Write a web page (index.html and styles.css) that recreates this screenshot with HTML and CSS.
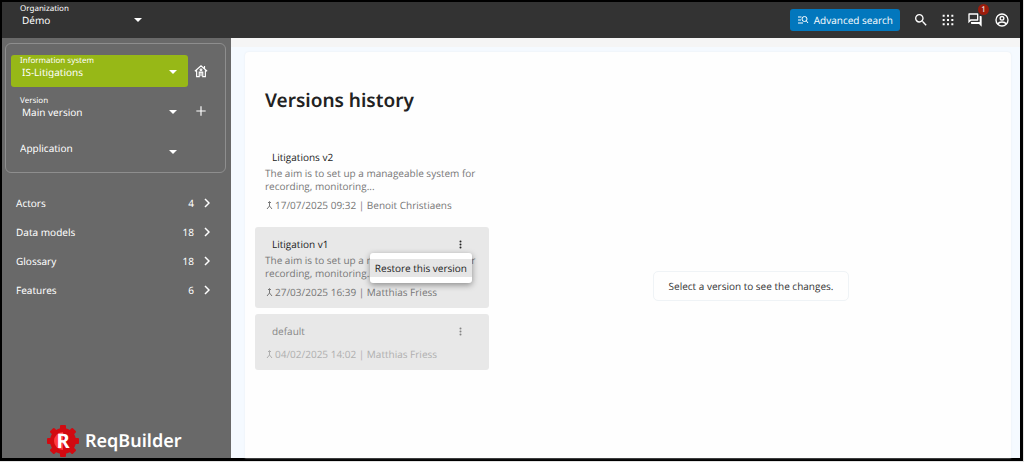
FILE: index.html
```html
<!DOCTYPE html>
<html lang="en">
<head>
    <meta charset="UTF-8">
    <meta name="viewport" content="width=device-width, initial-scale=1.0">
    <title>ReqBuilder - Versions history</title>
    <link rel="stylesheet" href="styles.css">
</head>
<body>
    <div class="app">
        <header class="topbar">
            <div class="field org-field">
                <label for="organization">Organization</label>
                <select id="organization"><option>Démo</option></select>
            </div>
            <div class="topbar-actions">
                <button class="btn-search" type="button">
                    <svg width="12" height="12" viewBox="0 0 24 24" fill="none" stroke="currentColor" stroke-width="2"><path d="M2 6h7M2 12h6M2 18h10"/><circle cx="15" cy="10" r="5"/><path d="M18.500 13.500L22 18"/></svg>
                    Advanced search
                </button>
                <button class="icon-btn" type="button" aria-label="Search">
                    <svg width="16" height="16" viewBox="0 0 24 24" fill="currentColor"><path d="M15.500 14h-.79l-.28-.27A6.470 6.470 0 0 0 16 9.500 6.500 6.500 0 1 0 9.500 16c1.610 0 3.090-.59 4.230-1.570l.27.28v.79l5 4.990L20.490 19l-4.990-5zm-6 0C7.010 14 5 11.990 5 9.500S7.010 5 9.500 5 14 7.010 14 9.500 11.990 14 9.500 14z"/></svg>
                </button>
                <button class="icon-btn" type="button" aria-label="Applications">
                    <svg width="16" height="16" viewBox="0 0 24 24" fill="currentColor"><path d="M4 4h3v3H4zM10.500 4h3v3h-3zM17 4h3v3h-3zM4 10.500h3v3H4zM10.500 10.500h3v3h-3zM17 10.500h3v3h-3zM4 17h3v3H4zM10.500 17h3v3h-3zM17 17h3v3h-3z"/></svg>
                </button>
                <button class="icon-btn" type="button" aria-label="Messages">
                    <svg width="16" height="16" viewBox="0 0 24 24" fill="currentColor"><path d="M15 4v7H5.170L4 12.170V4h11m1-2H3c-.55 0-1 .45-1 1v14l4-4h10c.55 0 1-.45 1-1V3c0-.55-.45-1-1-1zm5 4h-2v9H6v2c0 .55.45 1 1 1h11l4 4V7c0-.55-.45-1-1-1z"/></svg>
                    <span class="badge">1</span>
                </button>
                <button class="icon-btn" type="button" aria-label="Account">
                    <svg width="16" height="16" viewBox="0 0 24 24" fill="none" stroke="currentColor" stroke-width="2"><circle cx="12" cy="12" r="9"/><circle cx="12" cy="9.500" r="2.800"/><path d="M5.500 18c1.500-2.200 4-3 6.500-3s5 .8 6.500 3"/></svg>
                </button>
            </div>
        </header>

        <div class="layout">
            <aside class="sidebar">
                <div class="context-box">
                    <div class="context-row">
                        <div class="field field-green">
                            <label for="system">Information system</label>
                            <select id="system"><option>IS-Litigations</option></select>
                        </div>
                        <button class="icon-btn" type="button" aria-label="Home">
                            <svg width="14" height="14" viewBox="0 0 24 24" fill="none" stroke="currentColor" stroke-width="2"><path d="M1.500 12.500L12 3l10.500 9.500M18 8V3.500M4.500 11v10.500H9V14h6v7.500h4.500V11M12 14v7"/><circle cx="12" cy="10" r="1.500"/></svg>
                        </button>
                    </div>
                    <div class="context-row">
                        <div class="field">
                            <label for="version">Version</label>
                            <select id="version"><option>Main version</option></select>
                        </div>
                        <button class="icon-btn" type="button" aria-label="Add a version">
                            <svg width="14" height="14" viewBox="0 0 24 24" fill="none" stroke="currentColor" stroke-width="2"><path d="M12 4v16M4 12h16"/></svg>
                        </button>
                    </div>
                    <div class="context-row">
                        <div class="field field-plain">
                            <select id="application" aria-label="Application"><option>Application</option></select>
                        </div>
                    </div>
                </div>

                <nav class="menu">
                    <a href="#actors"><span>Actors</span><span class="count">4</span><svg width="6" height="10" viewBox="0 0 6 10"><path d="M1 1l4 4-4 4"/></svg></a>
                    <a href="#data-models"><span>Data models</span><span class="count">18</span><svg width="6" height="10" viewBox="0 0 6 10"><path d="M1 1l4 4-4 4"/></svg></a>
                    <a href="#glossary"><span>Glossary</span><span class="count">18</span><svg width="6" height="10" viewBox="0 0 6 10"><path d="M1 1l4 4-4 4"/></svg></a>
                    <a href="#features"><span>Features</span><span class="count">6</span><svg width="6" height="10" viewBox="0 0 6 10"><path d="M1 1l4 4-4 4"/></svg></a>
                </nav>

                <div class="logo">
                    <div class="logo-mark">
                        <svg width="32" height="32" viewBox="0 0 32 32">
                            <g fill="#d20a11">
                                <circle cx="16" cy="16" r="13"/>
                                <rect x="13" y="0" width="6" height="32" rx="1"/>
                                <rect x="13" y="0" width="6" height="32" rx="1" transform="rotate(45 16 16)"/>
                                <rect x="13" y="0" width="6" height="32" rx="1" transform="rotate(90 16 16)"/>
                                <rect x="13" y="0" width="6" height="32" rx="1" transform="rotate(135 16 16)"/>
                            </g>
                            <path d="M16 7a9 9 0 0 0 0 18z" fill="#ff3b40"/>
                        </svg>
                        <span>R</span>
                    </div>
                    <span class="logo-name">ReqBuilder</span>
                </div>
            </aside>

            <main class="content">
                <section class="panel">
                    <div class="history">
                        <h1>Versions history</h1>

                        <article class="version current">
                            <div class="version-head"><h2>Litigations v2</h2></div>
                            <p>The aim is to set up a manageable system for recording, monitoring...</p>
                            <div class="meta">
                                <svg width="7" height="9" viewBox="0 0 7 9"><path d="M2 2l1.500-1.500L5 2M3.500 1v4L1 8M3.500 5L6 8"/></svg>
                                17/07/2025 09:32 | Benoit Christiaens
                            </div>
                        </article>

                        <article class="version">
                            <div class="version-head">
                                <h2>Litigation v1</h2>
                                <button class="more" type="button" aria-label="Version actions">
                                    <svg width="3" height="9" viewBox="0 0 3 9" fill="currentColor"><circle cx="1.500" cy="1.500" r="1"/><circle cx="1.500" cy="4.500" r="1"/><circle cx="1.500" cy="7.500" r="1"/></svg>
                                </button>
                            </div>
                            <p>The aim is to set up a manageable system for recording, monitoring...</p>
                            <div class="meta">
                                <svg width="7" height="9" viewBox="0 0 7 9"><path d="M2 2l1.500-1.500L5 2M3.500 1v4L1 8M3.500 5L6 8"/></svg>
                                27/03/2025 16:39 | Matthias Friess
                            </div>
                            <div class="popup">
                                <button type="button">Restore this version</button>
                            </div>
                        </article>

                        <article class="version">
                            <div class="faded">
                                <div class="version-head">
                                    <h2>default</h2>
                                    <button class="more" type="button" aria-label="Version actions">
                                        <svg width="3" height="9" viewBox="0 0 3 9" fill="currentColor"><circle cx="1.500" cy="1.500" r="1"/><circle cx="1.500" cy="4.500" r="1"/><circle cx="1.500" cy="7.500" r="1"/></svg>
                                    </button>
                                </div>
                                <div class="meta">
                                    <svg width="7" height="9" viewBox="0 0 7 9"><path d="M2 2l1.500-1.500L5 2M3.500 1v4L1 8M3.500 5L6 8"/></svg>
                                    04/02/2025 14:02 | Matthias Friess
                                </div>
                            </div>
                        </article>
                    </div>

                    <div class="changes">
                        <div class="empty">Select a version to see the changes.</div>
                    </div>
                </section>
            </main>
        </div>
    </div>
</body>
</html>
```
FILE: styles.css
```css
* {
    box-sizing: border-box;
}
body {
    margin: 0;
    padding: 0 1px 1px 0;
    min-height: 100vh;
    display: flex;
    background: #e4e4e4;
    font-family: "Noto Sans", sans-serif;
    font-size: 10px;
    color: #333;
    text-rendering: geometricPrecision;
}
button,
select {
    font-family: inherit;
    font-size: inherit;
    color: inherit;
    background: none;
    border: none;
    padding: 0;
    margin: 0;
    cursor: pointer;
    text-rendering: inherit;
}
svg {
    display: block;
    flex: none;
}
.app {
    flex: 1;
    display: flex;
    flex-direction: column;
    border: 2px solid #000;
    border-right-width: 3px;
    border-bottom-width: 3px;
}

/* Top bar */
.topbar {
    display: flex;
    justify-content: space-between;
    align-items: center;
    height: 36px;
    padding-right: 10px;
    background: #333;
    color: #fff;
}
.topbar-actions {
    display: flex;
    align-items: center;
    gap: 11px;
}
.btn-search {
    display: flex;
    align-items: center;
    gap: 5px;
    height: 22px;
    padding: 0 7px;
    margin-right: 2px;
    background: #0277bd;
    border-radius: 3px;
    font-family: "Open Sans", sans-serif;
    font-weight: 500;
}
.icon-btn {
    position: relative;
    color: #fff;
}
.badge {
    position: absolute;
    top: -8px;
    right: -6px;
    width: 11px;
    height: 11px;
    border-radius: 50%;
    background: #9c1c0c;
    font-size: 8px;
    line-height: 11px;
    text-align: center;
}

/* Drop-down fields */
.field {
    position: relative;
    width: 177px;
    height: 32px;
    padding-left: 9px;
    color: #fff;
}
.field label {
    display: block;
    font-size: 8px;
    line-height: 11px;
}
.field select {
    display: block;
    width: 100%;
    height: 12px;
    padding-left: 2px;
    appearance: none;
    line-height: 12px;
}
.field option {
    color: #333;
}
.field::after {
    content: "";
    position: absolute;
    right: 11px;
    top: 15px;
    border: 4px solid transparent;
    border-top-color: #fff;
    border-bottom: none;
    pointer-events: none;
}
.org-field {
    width: 151px;
    height: 34px;
    padding-left: 18px;
}
.field-green {
    background: #97b817;
    border-radius: 3px;
}
.field-plain select {
    height: 26px;
    padding-left: 0;
}

/* Sidebar */
.layout {
    flex: 1;
    display: flex;
}
.sidebar {
    width: 229px;
    display: flex;
    flex-direction: column;
    background: #696969;
    color: #fff;
}
.context-box {
    display: flex;
    flex-direction: column;
    gap: 8px;
    height: 130px;
    margin: 5px 5px 0 3px;
    padding: 11px 5px;
    border: 1px solid #8e8e8e;
    border-radius: 6px;
}
.context-row {
    display: flex;
    align-items: center;
    gap: 6px;
}
.menu {
    margin-top: 15px;
}
.menu a {
    display: flex;
    align-items: center;
    height: 29px;
    padding: 0 21px 0 14px;
    color: #fff;
    text-decoration: none;
}
.menu .count {
    margin-left: auto;
    margin-right: 10px;
}
.menu path {
    fill: none;
    stroke: #fff;
    stroke-width: 1.5;
}
.logo {
    display: flex;
    align-items: center;
    gap: 6px;
    margin-top: auto;
    padding: 0 0 1px 45px;
}
.logo-mark {
    display: grid;
    place-items: center;
}
.logo-mark svg,
.logo-mark span {
    grid-area: 1 / 1;
}
.logo-mark span {
    font-size: 20px;
    font-weight: 700;
    line-height: 20px;
}
.logo-name {
    font-size: 18px;
    font-weight: 600;
    line-height: 24px;
}

/* Content */
.content {
    flex: 1;
    display: flex;
    padding: 5px 9px 0 14px;
    background: #f5faff;
    border-top: 9px solid #f5f5f5;
}
.panel {
    flex: 1;
    display: flex;
    padding: 0 10px;
    background: #fefefe;
    border-radius: 4px 4px 0 0;
    box-shadow: 0 0 2px #e6eaee;
    font-family: "Open Sans", sans-serif;
}
.history {
    width: 234px;
    display: flex;
    flex-direction: column;
    gap: 6px;
}
h1 {
    margin: 34px 10px 20px;
    font-family: "Noto Sans", sans-serif;
    font-size: 19px;
    line-height: 28px;
    font-weight: 600;
    color: #222;
}
.version {
    position: relative;
    padding: 10px 10px 9px;
    background: #e8e8e8;
    border-radius: 3px;
    color: #777;
}
.version.current {
    background: none;
}
.version-head {
    display: flex;
    justify-content: space-between;
    align-items: center;
    padding: 0 17px 0 7px;
    color: #222;
}
h2 {
    margin: 0;
    font-size: 10px;
    line-height: 14px;
    font-weight: 500;
}
.version p {
    margin: 3px 0 0;
    line-height: 13px;
}
.more {
    padding: 2px 10px;
    margin-right: -10px;
}
.meta {
    display: flex;
    align-items: center;
    gap: 2px;
    margin-top: 6px;
    padding-left: 1px;
    line-height: 13px;
}
.meta path {
    fill: none;
    stroke: currentColor;
}
.faded {
    opacity: 0.5;
}
.faded .meta {
    margin-top: 10px;
}
.popup {
    position: absolute;
    top: 26px;
    right: 17px;
    padding: 6px 0;
    background: #fff;
    border-radius: 3px;
    box-shadow: 0 2px 6px rgba(0, 0, 0, 0.4);
}
.popup button {
    display: block;
    height: 18px;
    padding: 0 5px;
    background: #e5e5e5;
    color: #222;
}
.changes {
    flex: 1;
    padding: 219px 0 0 12px;
}
.empty {
    width: fit-content;
    margin: 0 auto;
    padding: 7px 15px;
    border: 1px solid #eff3f6;
    border-radius: 5px;
    line-height: 14px;
    color: #333;
}
```
